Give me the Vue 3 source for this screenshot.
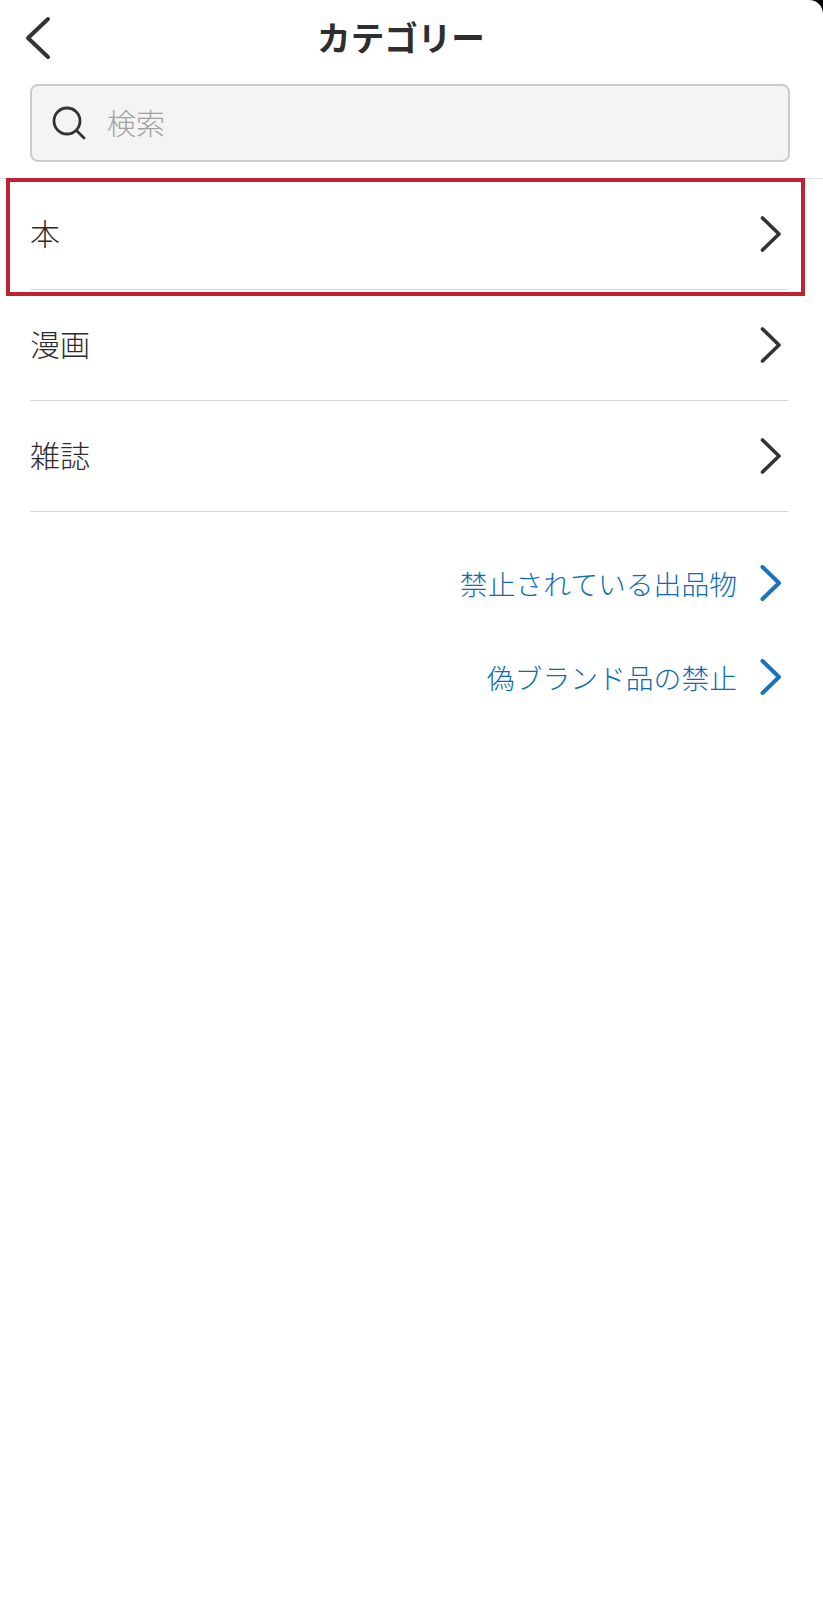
<script setup>
const rows = ['本', '漫画', '雑誌']
const links = ['禁止されている出品物', '偽ブランド品の禁止']
</script>

<template>
  <div class="page">
    <header class="head">
      <svg class="back" width="28" height="44" viewBox="0 0 28 44">
        <path d="M24 3 L4 22 L24 41" />
      </svg>
      <h1 class="title">カテゴリー</h1>
    </header>
    <div class="search-wrap">
      <div class="search">
        <svg class="glass" width="34" height="34" viewBox="0 0 34 34">
          <circle cx="15" cy="15" r="13" />
          <path d="M24.5 24.5 L32 32" />
        </svg>
        <span class="placeholder">検索</span>
      </div>
    </div>
    <ul class="list">
      <li v-for="(r, i) in rows" :key="r" class="row">
        <span class="row-text">{{ r }}</span>
        <svg class="chev" width="22" height="36" viewBox="0 0 22 36">
          <path d="M2.5 2 L19 18 L2.5 34" />
        </svg>
        <div v-if="i === 0" class="mark"></div>
      </li>
    </ul>
    <div class="links">
      <a v-for="l in links" :key="l" class="link">
        <span>{{ l }}</span>
        <svg class="chev blue" width="22" height="36" viewBox="0 0 22 36">
          <path d="M2.5 2 L19 18 L2.5 34" />
        </svg>
      </a>
    </div>
    <svg class="corner" width="14" height="14" viewBox="0 0 14 14">
      <path d="M0 0 H14 V14 C14 6 8 0 0 0 Z" />
    </svg>
  </div>
</template>

<style>
body { margin: 0; background: #fff; }
</style>

<style scoped>
.page {
  position: relative;
  width: 823px;
  height: 1600px;
  overflow: hidden;
  background: #fff;
  color: #2b2b2b;
  font-family: "Noto Sans CJK JP", "Noto Sans", sans-serif;
  font-weight: 300;
}
.head {
  position: relative;
  height: 84px;
  display: flex;
  justify-content: center;
  padding-right: 21px;
}
.back {
  position: absolute;
  left: 24px;
  top: 16px;
}
.back path {
  fill: none;
  stroke: #333;
  stroke-width: 4;
  stroke-linecap: round;
  stroke-linejoin: round;
}
.chev path {
  fill: none;
  stroke: #333;
  stroke-width: 3.6;
  stroke-linecap: round;
  stroke-linejoin: round;
}
.title {
  margin: 0;
  padding-top: 13px;
  font-size: 33.6px;
  line-height: 48px;
  font-weight: 700;
  color: #2e2e2e;
}
.search-wrap {
  padding: 0 33px 16px 30px;
  border-bottom: 1px solid #ddd;
}
.search {
  box-sizing: border-box;
  height: 78px;
  display: flex;
  align-items: center;
  gap: 21px;
  padding-left: 20px;
  background: #f4f4f4;
  border: 2px solid #ccc;
  border-radius: 8px;
}
.glass {
  margin-top: -1px;
}
.glass circle, .glass path {
  fill: none;
  stroke: #333;
  stroke-width: 2.8;
  stroke-linecap: round;
}
.placeholder {
  margin-top: -2px;
  font-size: 29px;
  color: #a2a2a2;
}
.list {
  list-style: none;
  margin: 0;
  padding: 0 35px 0 30px;
}
.row {
  position: relative;
  box-sizing: border-box;
  height: 111px;
  display: flex;
  align-items: center;
  justify-content: space-between;
  padding: 0 6px 0 0;
  border-bottom: 1px solid #d8d8d8;
  font-size: 30px;
}
.row-text {
  margin-top: -4px;
}
.mark {
  position: absolute;
  left: -24px;
  right: -17px;
  top: -1px;
  bottom: -7px;
  border: 4px solid #bf2231;
}
.links {
  padding: 51px 41px 0 0;
  display: flex;
  flex-direction: column;
  align-items: flex-end;
  gap: 54px;
}
.link {
  display: flex;
  align-items: center;
  gap: 23px;
  font-size: 27.8px;
  line-height: 40px;
  color: #0f6cb2;
}
.chev.blue path {
  stroke: #1a73b8;
  stroke-width: 4;
}
.corner {
  position: absolute;
  top: 0;
  right: 0;
}
.corner path {
  fill: #000;
}
</style>
